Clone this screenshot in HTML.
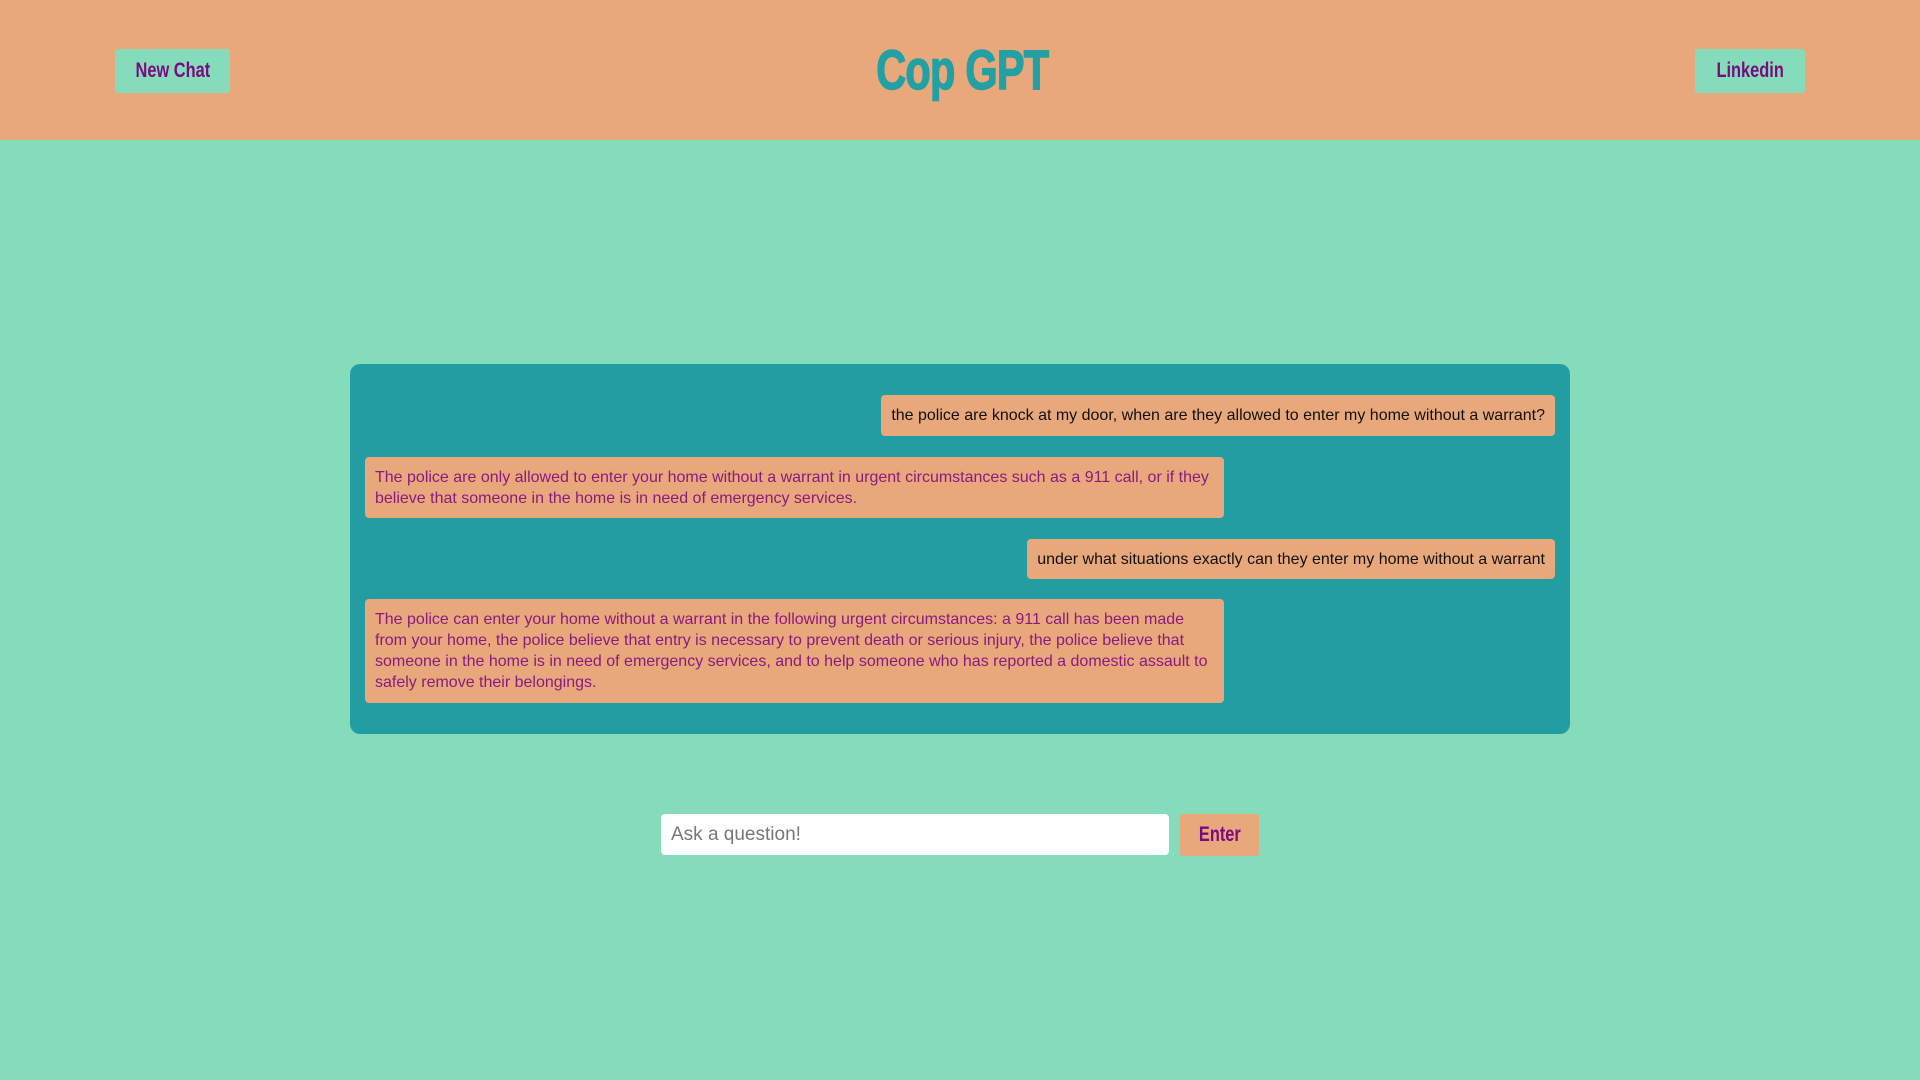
<!DOCTYPE html>
<html><head><meta charset="utf-8"><style>
*{box-sizing:border-box;margin:0;padding:0}
body{width:1920px;height:1080px;background:#85DCBA;font-family:"Liberation Sans",sans-serif;position:relative;overflow:hidden}
.hdr{position:absolute;left:0;top:0;width:1920px;height:140px;background:#E8A87C}
.btn{position:absolute;background:#85DCBA;color:#7a0a7f;font-weight:bold;font-size:21px;border-radius:3px;display:flex;align-items:center;justify-content:center;white-space:nowrap}
.btn span{display:inline-block;transform:scaleX(.78)}
.title{position:absolute;left:812px;top:38px;width:300px;text-align:center;font-size:56px;font-weight:bold;color:#22A0A3;line-height:64px;white-space:nowrap;-webkit-text-stroke:1.5px #22A0A3}
.title span{display:inline-block;transform:scaleX(.74);letter-spacing:-1px}
.box{position:absolute;left:350px;top:364px;width:1220px;height:370px;background:#229EA3;border-radius:10px}
.m{position:absolute;background:#E8A87C;border-radius:4px;font-size:16px;line-height:21px;padding:10px 10px}
.u{color:#111}
.b{color:#8a1a80}
.inp{position:absolute;left:661px;top:814px;width:508px;height:41px;background:#fff;border-radius:4px;color:#777;font-size:19px;padding:10px 10px}
</style></head><body>
<div class="hdr">
<div class="btn" style="left:115px;top:49px;width:115px;height:44px"><span>New Chat</span></div>
<div class="title"><span>Cop GPT</span></div>
<div class="btn" style="left:1695px;top:49px;width:110px;height:44px"><span>Linkedin</span></div>
</div>
<div class="box">
<div class="m u" style="right:15px;top:31px;height:41px;white-space:nowrap">the police are knock at my door, when are they allowed to enter my home without a warrant?</div>
<div class="m b" style="left:15px;top:93px;width:859px;height:61px">The police are only allowed to enter your home without a warrant in urgent circumstances such as a 911 call, or if they believe that someone in the home is in need of emergency services.</div>
<div class="m u" style="right:15px;top:175px;height:40px;white-space:nowrap">under what situations exactly can they enter my home without a warrant</div>
<div class="m b" style="left:15px;top:235px;width:859px;height:104px">The police can enter your home without a warrant in the following urgent circumstances: a 911 call has been made from your home, the police believe that entry is necessary to prevent death or serious injury, the police believe that someone in the home is in need of emergency services, and to help someone who has reported a domestic assault to safely remove their belongings.</div>
</div>
<div class="inp">Ask a question!</div>
<div class="btn" style="left:1180px;top:814px;width:79px;height:42px;background:#E8A87C"><span>Enter</span></div>
</body></html>
